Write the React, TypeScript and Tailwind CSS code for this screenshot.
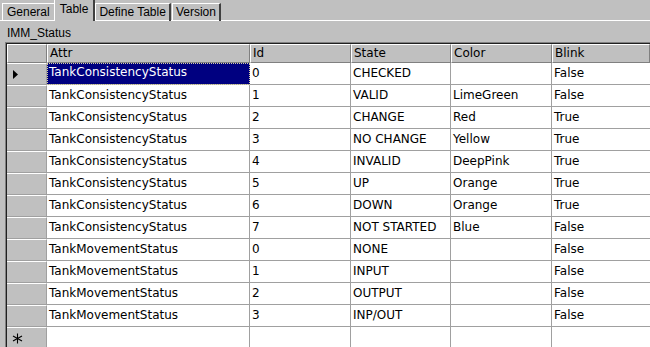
import React from 'react';

type Row = { attr: string; id: string; state: string; color: string; blink: string };

const rows: Row[] = [
  { attr: 'TankConsistencyStatus', id: '0', state: 'CHECKED', color: '', blink: 'False' },
  { attr: 'TankConsistencyStatus', id: '1', state: 'VALID', color: 'LimeGreen', blink: 'False' },
  { attr: 'TankConsistencyStatus', id: '2', state: 'CHANGE', color: 'Red', blink: 'True' },
  { attr: 'TankConsistencyStatus', id: '3', state: 'NO CHANGE', color: 'Yellow', blink: 'True' },
  { attr: 'TankConsistencyStatus', id: '4', state: 'INVALID', color: 'DeepPink', blink: 'True' },
  { attr: 'TankConsistencyStatus', id: '5', state: 'UP', color: 'Orange', blink: 'True' },
  { attr: 'TankConsistencyStatus', id: '6', state: 'DOWN', color: 'Orange', blink: 'True' },
  { attr: 'TankConsistencyStatus', id: '7', state: 'NOT STARTED', color: 'Blue', blink: 'False' },
  { attr: 'TankMovementStatus', id: '0', state: 'NONE', color: '', blink: 'False' },
  { attr: 'TankMovementStatus', id: '1', state: 'INPUT', color: '', blink: 'False' },
  { attr: 'TankMovementStatus', id: '2', state: 'OUTPUT', color: '', blink: 'False' },
  { attr: 'TankMovementStatus', id: '3', state: 'INP/OUT', color: '', blink: 'False' },
];

const cols = 'grid grid-cols-[40px_203px_101px_100px_101px_1fr]';
const headers = ['Attr', 'Id', 'State', 'Color', 'Blink'];

// --- tab strip ---
const Tabs: React.FC = () => (
  <div className="flex items-end h-[21px] pl-[2px] border-b border-white">
    <div className="h-[18px] px-[4px] border-t border-l border-white border-r border-r-[#404040] leading-[17px] mb-[-1px] -mr-[1px]">General</div>
    <div className="relative z-10 h-[22px] px-[5px] border-t border-l border-white border-r-2 border-r-[#404040] bg-[#c0c0c0] leading-[18px] mb-[-1px]">Table</div>
    <div className="h-[18px] px-[3px] border-t border-l border-white border-r-2 border-r-[#404040] leading-[17px] mb-[-1px]">Define Table</div>
    <div className="h-[18px] px-[3px] ml-[1px] border-t border-l border-white border-r-2 border-r-[#404040] leading-[17px] mb-[-1px]">Version</div>
  </div>
);

const NewRowMark = () => (
  <svg width="11" height="11" viewBox="0 0 11 11" className="ml-[5px]">
    <path d="M5.5 0.5v10M1 3l9 5M1 8l9-5" stroke="#000" strokeWidth="1.1" fill="none" />
  </svg>
);

export default function App() {
  return (
    <div className="w-[650px] h-[347px] overflow-hidden bg-[#c0c0c0] text-[12px] text-black select-none" style={{ fontFamily: '"Liberation Sans", Arial, sans-serif' }}>
      <Tabs />
      <div className="pl-[7px] pt-[5px] h-[21px] leading-[14px]">IMM_Status</div>

      {/* grid */}
      <div className="ml-[5px] border-t border-l border-[#808080] text-[12px] font-['DejaVu_Sans',sans-serif]">
        <div className="border-t border-l border-[#202020]">
          {/* header */}
          <div className={`${cols} h-[19px]`}>
            <div className="border-t border-l border-white border-r border-r-[#808080] border-b border-b-[#808080]" />
            {headers.map(h => (
              <div key={h} className="pl-[2px] leading-[16px] border-t border-l border-white border-r border-r-[#808080] border-b border-b-[#808080]">{h}</div>
            ))}
          </div>

          {rows.map((r, i) => {
            const selected = i === 0;
            return (
              <div key={i} className={`${cols} h-[22px]`}>
                <div className="flex items-center border-t border-white border-r border-r-[#a0a0a0] border-b border-b-[#a0a0a0]">
                  {selected && (
                    <svg width="6" height="9" viewBox="0 0 6 9" className="ml-[6px]">
                      <path d="M0 0L5 4.5L0 9Z" fill="#000" />
                    </svg>
                  )}
                </div>
                <div className={selected
                  ? 'bg-[#000080] text-white pl-[2px] leading-[19px] outline-1 outline-dotted outline-[#d8d0a0] -outline-offset-1 border-b border-b-[#a0a0a0]'
                  : 'bg-white pl-[2px] leading-[21px] border-r border-b border-[#a0a0a0]'}>
                  {r.attr}
                </div>
                <div className="bg-white pl-[2px] leading-[21px] border-r border-b border-[#a0a0a0]">{r.id}</div>
                <div className="bg-white pl-[2px] leading-[21px] border-r border-b border-[#a0a0a0]">{r.state}</div>
                <div className="bg-white pl-[2px] leading-[21px] border-r border-b border-[#a0a0a0]">{r.color}</div>
                <div className="bg-white pl-[2px] leading-[21px] border-b border-[#a0a0a0]">{r.blink}</div>
              </div>
            );
          })}

          {/* new row */}
          <div className={`${cols} h-[22px]`}>
            <div className="flex items-center border-t border-white border-r border-r-[#a0a0a0]">
              <NewRowMark />
            </div>
            <div className="bg-white border-r border-[#a0a0a0]" />
            <div className="bg-white border-r border-[#a0a0a0]" />
            <div className="bg-white border-r border-[#a0a0a0]" />
            <div className="bg-white border-r border-[#a0a0a0]" />
            <div className="bg-white" />
          </div>
        </div>
      </div>
    </div>
  );
}
